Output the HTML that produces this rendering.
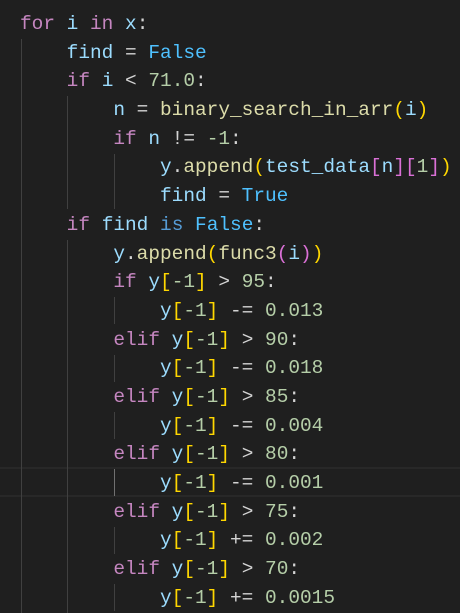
<!DOCTYPE html>
<html><head><meta charset="utf-8"><style>
html,body{margin:0;padding:0;background:#1f1f1f;width:460px;height:613px;overflow:hidden}
.c{position:relative;font-family:"Liberation Mono",monospace;font-size:19.45px;line-height:28.7px;color:#d4d4d4;padding-top:10px}
.l{height:28.7px;padding-left:20px;position:relative;z-index:2;white-space:pre}
.k{color:#c586c0}.v{color:#9cdcfe}.b{color:#569cd6}.t{color:#4fc1ff}.n{color:#b5cea8}.f{color:#dcdcaa}
.g{color:#ffd700}.p{color:#da70d6}
.g1,.hl{position:absolute;z-index:1}
.g1{width:1px;background:#404040}
.hl{left:0;width:460px;height:26px;border-top:2px solid #282828;border-bottom:2px solid #282828;top:467px}
</style></head><body><div class="c"><div class="hl"></div><div class="g1" style="left:21px;top:39px;height:574px"></div><div class="g1" style="left:67px;top:96px;height:113px"></div><div class="g1" style="left:67px;top:240px;height:373px"></div><div class="g1" style="left:114px;top:154px;height:55px"></div><div class="g1" style="left:114px;top:297px;height:27px"></div><div class="g1" style="left:114px;top:355px;height:27px"></div><div class="g1" style="left:114px;top:412px;height:27px"></div><div class="g1" style="left:114px;top:469px;height:27px;background:#707070"></div><div class="g1" style="left:114px;top:527px;height:27px"></div><div class="g1" style="left:114px;top:584px;height:27px"></div>
<div class="l"><span class="k">for</span> <span class="v">i</span> <span class="k">in</span> <span class="v">x</span>:</div>
<div class="l">    <span class="v">find</span> = <span class="t">False</span></div>
<div class="l">    <span class="k">if</span> <span class="v">i</span> &lt; <span class="n">71.0</span>:</div>
<div class="l">        <span class="v">n</span> = <span class="f">binary_search_in_arr</span><span class="g">(</span><span class="v">i</span><span class="g">)</span></div>
<div class="l">        <span class="k">if</span> <span class="v">n</span> != <span class="n">-1</span>:</div>
<div class="l">            <span class="v">y</span>.<span class="f">append</span><span class="g">(</span><span class="v">test_data</span><span class="p">[</span><span class="v">n</span><span class="p">][</span><span class="n">1</span><span class="p">]</span><span class="g">)</span></div>
<div class="l">            <span class="v">find</span> = <span class="t">True</span></div>
<div class="l">    <span class="k">if</span> <span class="v">find</span> <span class="b">is</span> <span class="t">False</span>:</div>
<div class="l">        <span class="v">y</span>.<span class="f">append</span><span class="g">(</span><span class="f">func3</span><span class="p">(</span><span class="v">i</span><span class="p">)</span><span class="g">)</span></div>
<div class="l">        <span class="k">if</span> <span class="v">y</span><span class="g">[</span><span class="n">-1</span><span class="g">]</span> &gt; <span class="n">95</span>:</div>
<div class="l">            <span class="v">y</span><span class="g">[</span><span class="n">-1</span><span class="g">]</span> -= <span class="n">0.013</span></div>
<div class="l">        <span class="k">elif</span> <span class="v">y</span><span class="g">[</span><span class="n">-1</span><span class="g">]</span> &gt; <span class="n">90</span>:</div>
<div class="l">            <span class="v">y</span><span class="g">[</span><span class="n">-1</span><span class="g">]</span> -= <span class="n">0.018</span></div>
<div class="l">        <span class="k">elif</span> <span class="v">y</span><span class="g">[</span><span class="n">-1</span><span class="g">]</span> &gt; <span class="n">85</span>:</div>
<div class="l">            <span class="v">y</span><span class="g">[</span><span class="n">-1</span><span class="g">]</span> -= <span class="n">0.004</span></div>
<div class="l">        <span class="k">elif</span> <span class="v">y</span><span class="g">[</span><span class="n">-1</span><span class="g">]</span> &gt; <span class="n">80</span>:</div>
<div class="l">            <span class="v">y</span><span class="g">[</span><span class="n">-1</span><span class="g">]</span> -= <span class="n">0.001</span></div>
<div class="l">        <span class="k">elif</span> <span class="v">y</span><span class="g">[</span><span class="n">-1</span><span class="g">]</span> &gt; <span class="n">75</span>:</div>
<div class="l">            <span class="v">y</span><span class="g">[</span><span class="n">-1</span><span class="g">]</span> += <span class="n">0.002</span></div>
<div class="l">        <span class="k">elif</span> <span class="v">y</span><span class="g">[</span><span class="n">-1</span><span class="g">]</span> &gt; <span class="n">70</span>:</div>
<div class="l">            <span class="v">y</span><span class="g">[</span><span class="n">-1</span><span class="g">]</span> += <span class="n">0.0015</span></div>
</div></body></html>
